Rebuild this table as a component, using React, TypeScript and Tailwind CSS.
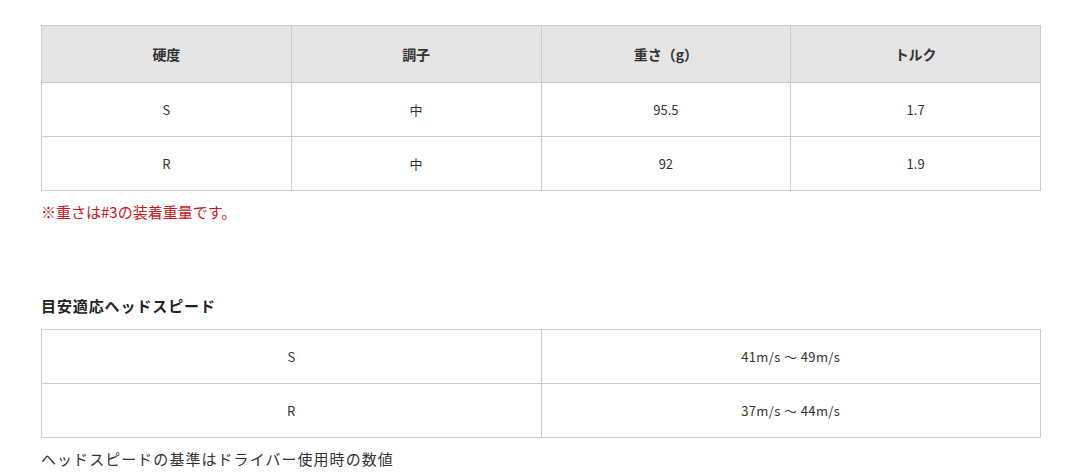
const font = { fontFamily: '"Noto Sans CJK JP", "Noto Sans", sans-serif' }

const specs = [
  { flex: "S", kick: "中", weight: "95.5", torque: "1.7" },
  { flex: "R", kick: "中", weight: "92", torque: "1.9" },
]

const speeds = [
  { flex: "S", range: "41m/s ～ 49m/s" },
  { flex: "R", range: "37m/s ～ 44m/s" },
]

function App() {
  return (
    <div className="min-h-[476px] bg-white text-[#333] font-['Noto_Sans_CJK_JP',sans-serif]">
      <div className="ml-[41px] w-[1000px] pt-[25px]">
        <table className="w-[1000px] table-fixed border-collapse text-[13px]">
          <thead>
            <tr className="h-[57px] bg-[#e5e5e5]">
              <th className="border border-[#ccc] font-bold text-[14px]">硬度</th>
              <th className="border border-[#ccc] font-bold text-[14px]">調子</th>
              <th className="border border-[#ccc] font-bold text-[14px]">重さ（g）</th>
              <th className="border border-[#ccc] font-bold text-[14px]">トルク</th>
            </tr>
          </thead>
          <tbody>
            {specs.map((r) => (
              <tr key={r.flex} className="h-[54px] text-center">
                <td className="border border-[#ccc]">{r.flex}</td>
                <td className="border border-[#ccc]">{r.kick}</td>
                <td className="border border-[#ccc]">{r.weight}</td>
                <td className="border border-[#ccc]">{r.torque}</td>
              </tr>
            ))}
          </tbody>
        </table>

        <p className="mt-[10px] text-[15px] leading-[22px] text-[#c8161d]">
          ※重さは#3の装着重量です。
        </p>

        <h3 className="mt-[72px] text-[15px] font-bold leading-[22px] tracking-[0.06em] text-[#222]">
          目安適応ヘッドスピード
        </h3>

        <table className="mt-[12px] w-[1000px] table-fixed border-collapse text-[13px]">
          <tbody>
            {speeds.map((r) => (
              <tr key={r.flex} className="h-[54px] text-center">
                <td className="border border-[#ccc]">{r.flex}</td>
                <td className="border border-[#ccc] tracking-[0.03em]">{r.range}</td>
              </tr>
            ))}
          </tbody>
        </table>

        <p className="mt-[10px] text-[15px] leading-[22px] tracking-[0.07em]" style={font}>
          ヘッドスピードの基準はドライバー使用時の数値
        </p>
      </div>
    </div>
  )
}

export default App
